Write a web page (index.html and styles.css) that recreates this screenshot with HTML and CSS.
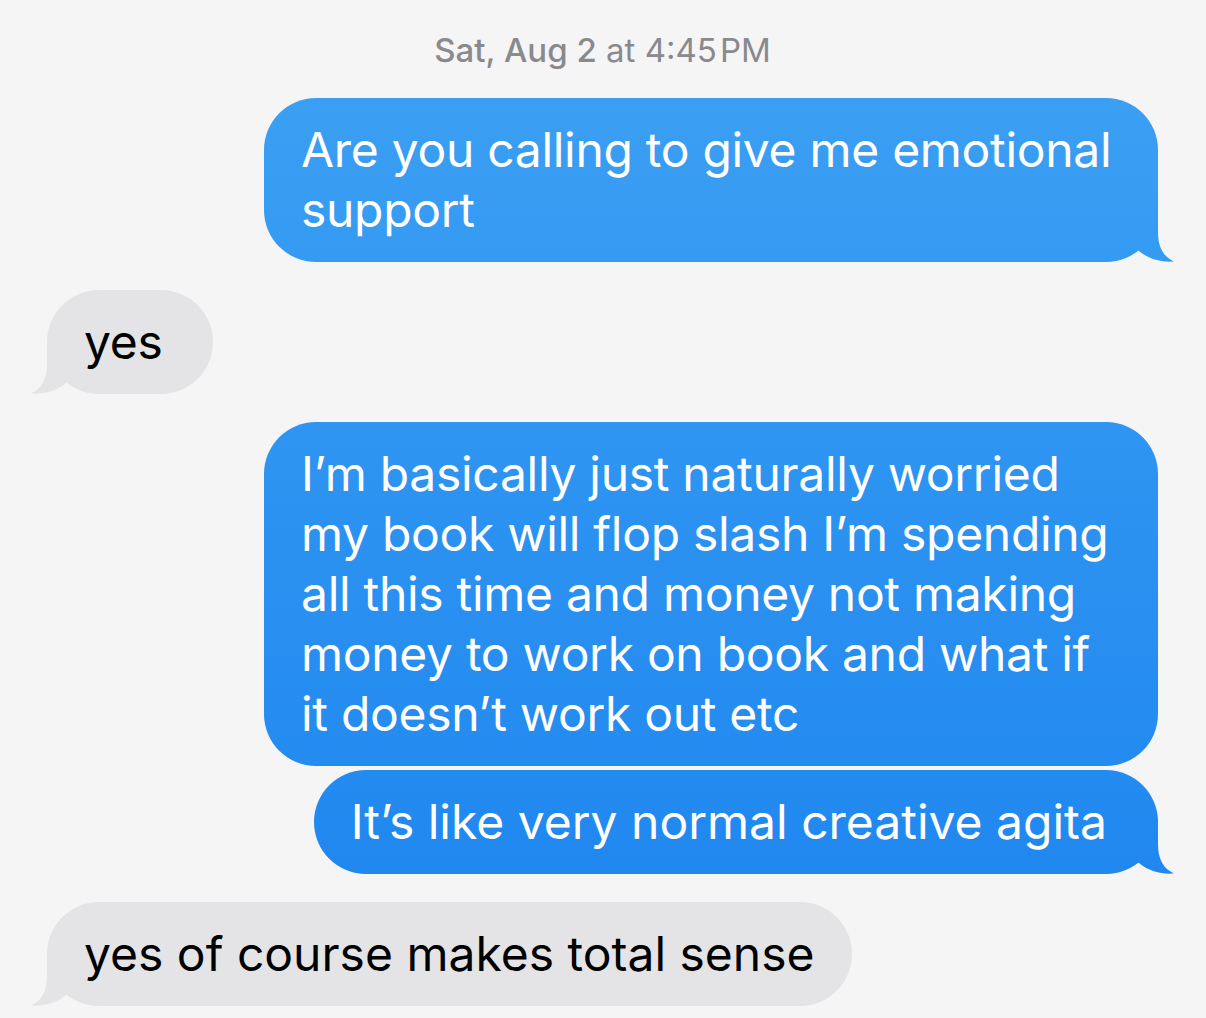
FILE: index.html
```html
<!DOCTYPE html>
<html lang="en">
<head>
<meta charset="utf-8">
<title>Messages</title>
<link rel="stylesheet" href="styles.css">
</head>
<body>
<main class="thread">
  <div class="stamp"><strong>Sat, Aug 2</strong> at 4:45&#8202;PM</div>
  <div class="row sent-row"><div class="bubble sent tail">Are you calling to give me emotional support</div></div>
  <div class="row recv-row gap"><div class="bubble recv tail roomy">yes</div></div>
  <div class="row sent-row gap"><div class="bubble sent">I’m basically just naturally worried my book will flop slash I’m spending all this time and money not making money to work on book and what if it doesn’t work out etc</div></div>
  <div class="row sent-row tight"><div class="bubble sent tail roomy loose">It’s like very normal creative agita</div></div>
  <div class="row recv-row gap"><div class="bubble recv tail loose">yes of course makes total sense</div></div>
</main>
</body>
</html>
```
FILE: styles.css
```css
html, body {
  margin: 0;
  padding: 0;
  background: #f5f5f5;
}
body {
  width: 1206px;
  height: 1018px;
  overflow: hidden;
  font-family: Inter, "Noto Sans", "Liberation Sans", sans-serif;
}
.thread {
  display: flex;
  flex-direction: column;
  padding: 30px 48px 0 47px;
}
.stamp {
  text-align: center;
  font-size: 33px;
  line-height: 40px;
  color: #8a8a8e;
  margin-bottom: 28px;
}
.stamp strong {
  font-weight: 550;
}
.row {
  display: flex;
}
.sent-row {
  justify-content: flex-end;
}
.recv-row {
  justify-content: flex-start;
}
.gap {
  margin-top: 28px;
}
.tight {
  margin-top: 4px;
}
.bubble {
  position: relative;
  max-width: 894px;
  box-sizing: border-box;
  padding: 22px 37px;
  border-radius: 52px;
  font-size: 48px;
  line-height: 60px;
  letter-spacing: -0.3px;
}
.loose {
  letter-spacing: 0;
}
.roomy {
  padding-right: 51px;
}
.sent {
  color: #ffffff;
  background: linear-gradient(to bottom, #3ea2f3 0px, #1b83ef 1018px) fixed;
}
.recv {
  color: #000000;
  background: #e4e4e6;
}
.tail::after {
  content: "";
  position: absolute;
  bottom: 0;
  width: 54px;
  height: 55px;
}
.sent.tail::after {
  right: -16px;
  background: linear-gradient(to bottom, #3ea2f3 0px, #1b83ef 1018px) fixed;
  clip-path: path("M38 0 L38 25 C38 41 44 50 54 54.5 C42 55.5 28 52 19 44 L0 33 L0 0 Z");
}
.recv.tail::after {
  left: -16px;
  background: #e4e4e6;
  clip-path: path("M16 0 L16 25 C16 41 10 50 0 54.5 C12 55.5 26 52 35 44 L54 33 L54 0 Z");
}
```
